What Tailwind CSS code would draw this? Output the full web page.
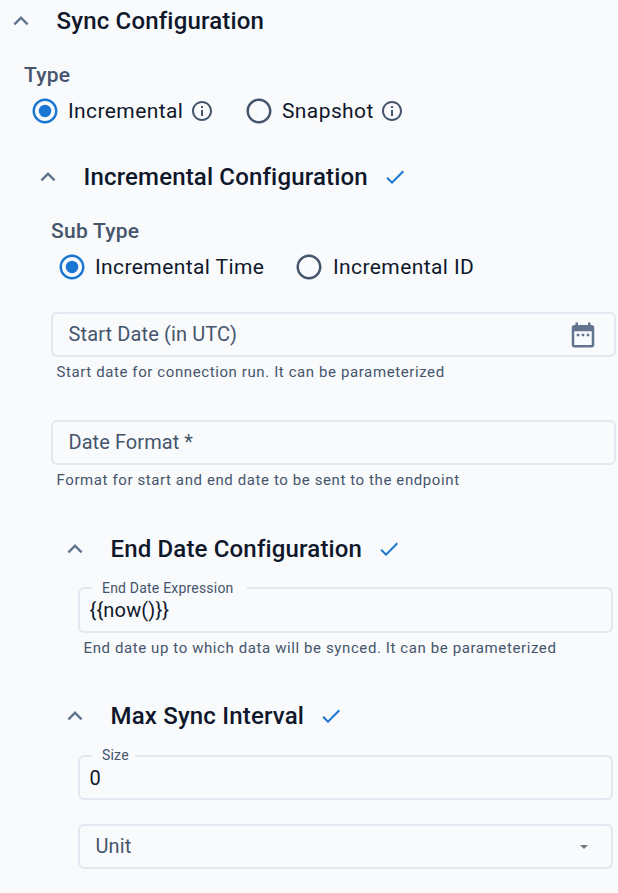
<!DOCTYPE html>
<html lang="en">
<head>
<meta charset="utf-8">
<title>Sync Configuration</title>
<script src="https://cdn.jsdelivr.net/npm/@tailwindcss/browser@4"></script>
</head>
<body class="bg-[#f9fafc] font-['Roboto',sans-serif] text-xl text-slate-900 whitespace-nowrap overflow-hidden">
<svg class="hidden">
  <symbol id="chevron" viewBox="0 0 24 24"><path fill="currentColor" d="M12 8l-6 6 1.41 1.41L12 10.83l4.59 4.58L18 14z"/></symbol>
  <symbol id="check" viewBox="0 0 24 24"><path fill="currentColor" d="M9 16.17 4.83 12l-1.42 1.41L9 19 21 7l-1.41-1.41z"/></symbol>
  <symbol id="info" viewBox="0 0 24 24"><path fill="currentColor" d="M11 7h2v2h-2zm0 4h2v6h-2zm1-9C6.48 2 2 6.48 2 12s4.48 10 10 10 10-4.48 10-10S17.52 2 12 2m0 18c-4.41 0-8-3.59-8-8s3.59-8 8-8 8 3.59 8 8-3.59 8-8 8"/></symbol>
  <symbol id="radio-off" viewBox="0 0 24 24"><path fill="currentColor" d="M12 2C6.48 2 2 6.48 2 12s4.48 10 10 10 10-4.48 10-10S17.52 2 12 2m0 18c-4.42 0-8-3.58-8-8s3.58-8 8-8 8 3.58 8 8-3.58 8-8 8"/></symbol>
  <symbol id="radio-on" viewBox="0 0 24 24"><use href="#radio-off"/><circle cx="12" cy="12" r="5" fill="currentColor"/></symbol>
  <symbol id="calendar" viewBox="0 0 24 24"><path fill="currentColor" d="M9 11H7v2h2zm4 0h-2v2h2zm4 0h-2v2h2zm2-7h-1V2h-2v2H8V2H6v2H5c-1.11 0-1.99.9-1.99 2L3 20c0 1.100.89 2 2 2h14c1.100 0 2-.9 2-2V6c0-1.100-.9-2-2-2m0 16H5V9h14z"/></symbol>
</svg>
<main class="h-[893px] w-[618px] pt-[6px]">
  <header class="flex h-[30px] items-center pl-[6px]">
    <svg class="size-[30px] text-slate-500"><use href="#chevron"/></svg>
    <h1 class="ml-[20.5px] text-[24px] leading-[30px] font-medium tracking-[0.18px]">Sync Configuration</h1>
  </header>
  <div class="mt-6 flex h-[30px] items-center pl-6 text-[21px] leading-[30px] font-medium tracking-[0.25px] text-slate-600">Type</div>
  <div class="mt-[6px] flex h-[30px] items-center pl-[30px] text-[21px] leading-[30px] tracking-[0.4px]">
    <svg class="size-[30px] text-[#1976d2]"><use href="#radio-on"/></svg>
    <span class="ml-2 w-[121px]">Incremental</span>
    <svg class="ml-[1px] size-6 text-slate-600"><use href="#info"/></svg>
    <svg class="ml-[30px] size-[30px] text-slate-600"><use href="#radio-off"/></svg>
    <span class="ml-2 w-[97px]">Snapshot</span>
    <svg class="ml-[1px] size-6 text-slate-600"><use href="#info"/></svg>
  </div>

  <section class="pl-[27px]">
    <header class="mt-9 flex h-[30px] items-center pl-[6px]">
      <svg class="size-[30px] text-slate-500"><use href="#chevron"/></svg>
      <h2 class="ml-[20.5px] w-[299.5px] text-[24px] leading-[30px] font-medium tracking-[0.16px]">Incremental Configuration</h2>
      <svg class="size-6 text-[#1976d2]"><use href="#check"/></svg>
    </header>
    <div class="mt-6 flex h-[30px] items-center pl-6 text-[21px] leading-[30px] font-medium tracking-[0.25px] text-slate-600">Sub Type</div>
    <div class="mt-[6px] flex h-[30px] items-center pl-[30px] text-[21px] leading-[30px] tracking-[0.4px]">
      <svg class="size-[30px] text-[#1976d2]"><use href="#radio-on"/></svg>
      <span class="ml-2 w-[199px]">Incremental Time</span>
      <svg class="size-[30px] text-slate-600"><use href="#radio-off"/></svg>
      <span class="ml-[9px]">Incremental ID</span>
    </div>
    <div class="pl-6">
      <div class="mt-[30px] flex h-[45px] w-[565px] items-center justify-between rounded-[6px] border-2 border-slate-200 pr-4 pl-[15.5px] text-slate-600">
        <span class="pb-[2px] tracking-[0.12px]">Start Date (in UTC)</span>
        <svg class="size-[30px] text-slate-500"><use href="#calendar"/></svg>
      </div>
      <p class="mt-[5px] h-5 pl-[5.5px] text-[15px] leading-5 tracking-[0.6px] text-slate-600">Start date for connection run. It can be parameterized</p>
      <div class="mt-[38px] flex h-[45px] w-[565px] items-center rounded-[6px] border-2 border-slate-200 pb-[2px] pl-[15.5px] tracking-[0.06px] text-slate-600">Date Format *</div>
      <p class="mt-[5px] h-5 pl-[5.5px] text-[15px] leading-5 tracking-[0.6px] text-slate-600">Format for start and end date to be sent to the endpoint</p>
    </div>

    <section class="pl-[27px]">
      <header class="mt-11 flex h-[30px] items-center pl-[6px]">
        <svg class="size-[30px] text-slate-500"><use href="#chevron"/></svg>
        <h3 class="ml-[20.5px] w-[266.5px] text-[24px] leading-[30px] font-medium tracking-[0.16px]">End Date Configuration</h3>
        <svg class="size-6 text-[#1976d2]"><use href="#check"/></svg>
      </header>
      <div class="relative mt-[23px] ml-6 flex h-[46px] w-[535px] items-center rounded-[6px] border-2 border-slate-200 pl-[9.500px]">
        <label class="absolute -top-[11px] left-3 w-[155px] bg-[#f9fafc] pl-[10px] text-[14px] leading-5 tracking-[0.2px] text-slate-600">End Date Expression</label>
        <span class="tracking-[0.16px]">{{now()}}</span>
      </div>
      <p class="mt-[5px] ml-6 h-5 pl-[5.5px] text-[15px] leading-5 tracking-[0.6px] text-slate-600">End date up to which data will be synced. It can be parameterized</p>
      <header class="mt-[43px] flex h-[30px] items-center pl-[6px]">
        <svg class="size-[30px] text-slate-500"><use href="#chevron"/></svg>
        <h3 class="ml-[20.5px] w-[208.5px] text-[24px] leading-[30px] font-medium tracking-[0.18px]">Max Sync Interval</h3>
        <svg class="size-6 text-[#1976d2]"><use href="#check"/></svg>
      </header>
      <div class="relative mt-6 ml-6 flex h-[45px] w-[535px] items-center rounded-[6px] border-2 border-slate-200 pl-[9.500px]">
        <label class="absolute -top-3 left-3 w-[43px] bg-[#f9fafc] pl-[10px] text-[14px] leading-5 tracking-[0.2px] text-slate-600">Size</label>
        <span>0</span>
      </div>
      <div class="mt-6 ml-6 flex h-[45px] w-[535px] items-center justify-between rounded-[6px] border-2 border-slate-200 pr-[23px] pl-[15.5px] text-slate-600">
        <span class="pb-[2px] tracking-[0.12px]">Unit</span>
        <svg class="h-1 w-2 text-[#757679]" viewBox="0 0 8 4"><path fill="currentColor" d="M0 0h8L4 4z"/></svg>
      </div>
    </section>
  </section>
</main>
</body>
</html>
